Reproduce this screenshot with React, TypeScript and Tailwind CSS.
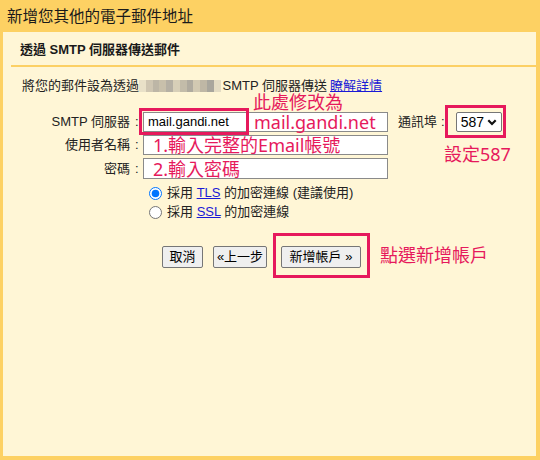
import React from "react";

const UI_FONT = "font-['Liberation_Sans','Noto_Sans_CJK_TC',sans-serif]";
const PINK_FONT = "font-['Noto_Sans','Noto_Sans_CJK_TC',sans-serif]";

// pixelated block that hides the address in the intro line
const MOSAIC = [
  "bg-[#e9e1c8]",
  "bg-[#cfc6b2]",
  "bg-[#bdb6a6]",
  "bg-[#c8c0ab]",
  "bg-[#b5b0a4]",
  "bg-[#d7cfb8]",
  "bg-[#c3bca9]",
  "bg-[#b0ab9f]",
  "bg-[#d2c9b2]",
  "bg-[#bfb7a5]",
  "bg-[#a9a69d]",
  "bg-[#e4dcc4]",
];

const Radio = ({ checked }: { checked: boolean }) => (
  <svg width="13" height="13" viewBox="0 0 13 13" className="shrink-0">
    {checked ? (
      <>
        <circle cx="6.5" cy="6.5" r="6" fill="#fff" stroke="#0075ff" strokeWidth="1" />
        <circle cx="6.5" cy="6.5" r="3.8" fill="#0075ff" />
      </>
    ) : (
      <circle cx="6.5" cy="6.5" r="6" fill="#fff" stroke="#767676" strokeWidth="1" />
    )}
  </svg>
);

const Btn = ({ children, className = "" }: { children: React.ReactNode; className?: string }) => (
  <div
    className={`h-[22px] flex items-center justify-center bg-[#efefef] border border-[#767676] rounded-[2px] text-[13px] text-black ${className}`}
  >
    {children}
  </div>
);

const Label = ({ text }: { text: string }) => (
  <div className="w-[136px] flex justify-end items-center">
    <span>{text}</span>
    <span className="ml-[5px] w-[4px]">:</span>
  </div>
);

export default function App() {
  return (
    <div className={`relative w-[540px] h-[460px] bg-[#fdd163] flex flex-col ${UI_FONT}`}>
      <div className="h-[32px] pl-[7px] pt-[1px] flex items-center text-[15.5px] text-[#1a1a1a]">
        新增您其他的電子郵件地址
      </div>

      <div className="flex-1 ml-[3px] mr-[4px] mb-[4px] bg-[#fff6d6] flex flex-col">
        <div className="h-[33px] pl-[17px] pt-[3px] flex items-center text-[13px] font-bold text-[#1a1a1a]">
          透過 SMTP 伺服器傳送郵件
        </div>
        <div className="ml-[8px] h-[2px] bg-[#fcd064]" />

        {/* intro line */}
        <div className="mt-[10px] pl-[19px] h-[18px] flex items-center text-[13px] text-[#222]">
          <span>將您的郵件設為透過</span>
          <div className="flex h-[12px]">
            {MOSAIC.map((c, i) => (
              <div key={i} className={`w-[6.8px] h-full ${c}`} />
            ))}
          </div>
          <span className="ml-[2px]">SMTP 伺服器傳送</span>
          <span className="ml-[3px] text-[#1a1ad6] underline">瞭解詳情</span>
        </div>

        {/* SMTP server + port */}
        <div className="mt-[17px] flex items-center h-[20px] text-[13px] text-[#222]">
          <Label text="SMTP 伺服器" />
          <div className="ml-[4px] w-[245px] h-[20px] bg-white border border-[#8a8a8a] flex items-center">
            <span className="pl-[4px] text-[13px] text-black">mail.gandi.net</span>
          </div>
          <div className="ml-[10px] flex items-center">
            <span>通訊埠</span>
            <span className="ml-[4px]">:</span>
          </div>
          <div className="ml-[11px] w-[46px] h-[20px] bg-white border border-[#767676] rounded-[2px] flex items-center pl-[4px] pr-[4px]">
            <span className="text-[14px] text-black">587</span>
            <svg width="10" height="7" viewBox="0 0 10 7" className="ml-auto">
              <path d="M1.3 1.3 L5 5 L8.7 1.3" fill="none" stroke="#111" strokeWidth="2.2" />
            </svg>
          </div>
        </div>

        {/* username */}
        <div className="mt-[3px] flex items-center h-[20px] text-[13px] text-[#222]">
          <Label text="使用者名稱" />
          <div className="ml-[4px] w-[245px] h-[20px] bg-white border border-[#8a8a8a] flex items-center">
            <span className={`pl-[9px] text-[18px] leading-none text-[#e6195c] whitespace-nowrap ${PINK_FONT}`}>
              1.輸入完整的Email帳號
            </span>
          </div>
        </div>

        {/* password */}
        <div className="mt-[3px] flex items-center h-[21px] text-[13px] text-[#222]">
          <Label text="密碼" />
          <div className="ml-[4px] w-[245px] h-[21px] bg-white border border-[#8a8a8a] flex items-center">
            <span className={`pl-[9px] text-[18px] leading-none text-[#e6195c] whitespace-nowrap ${PINK_FONT}`}>
              2.輸入密碼
            </span>
          </div>
        </div>

        {/* encryption */}
        <div className="mt-[7px] pl-[146px] flex flex-col gap-[5px] text-[13px] text-[#222]">
          <div className="flex items-center h-[14px] gap-[5px]">
            <Radio checked />
            <span>
              採用 <span className="text-[#1a1ad6] underline">TLS</span> 的加密連線 (建議使用)
            </span>
          </div>
          <div className="flex items-center h-[14px] gap-[5px]">
            <Radio checked={false} />
            <span>
              採用 <span className="text-[#1a1ad6] underline">SSL</span> 的加密連線
            </span>
          </div>
        </div>

        {/* buttons */}
        <div className="mt-[27px] pl-[159px] flex items-center">
          <Btn className="w-[41px]">取消</Btn>
          <Btn className="ml-[10px] w-[54px]">«上一步</Btn>
          <Btn className="ml-[14px] w-[80px]">新增帳戶 »</Btn>
        </div>
      </div>

      {/* annotations drawn over the form */}
      <div className="absolute left-[139px] top-[108px] w-[110px] h-[27px] border-[3px] border-[#e6195c]" />
      <div className={`absolute left-[254px] top-[113px] text-[18px] leading-[18px] text-[#e6195c] ${PINK_FONT}`}>
        mail.gandi.net
      </div>
      <div className={`absolute left-[253px] top-[93px] text-[18px] leading-[18px] text-[#e6195c] ${PINK_FONT}`}>
        此處修改為
      </div>
      <div className="absolute left-[445px] top-[105px] w-[61px] h-[33px] border-[3px] border-[#e6195c]" />
      <div className={`absolute left-[444px] top-[144px] text-[18px] leading-[20px] text-[#e6195c] ${PINK_FONT}`}>
        設定587
      </div>
      <div className="absolute left-[273px] top-[233px] w-[97px] h-[45px] border-[3px] border-[#e6195c]" />
      <div className={`absolute left-[380px] top-[245px] text-[18px] leading-[20px] text-[#e6195c] ${PINK_FONT}`}>
        點選新增帳戶
      </div>
    </div>
  );
}
